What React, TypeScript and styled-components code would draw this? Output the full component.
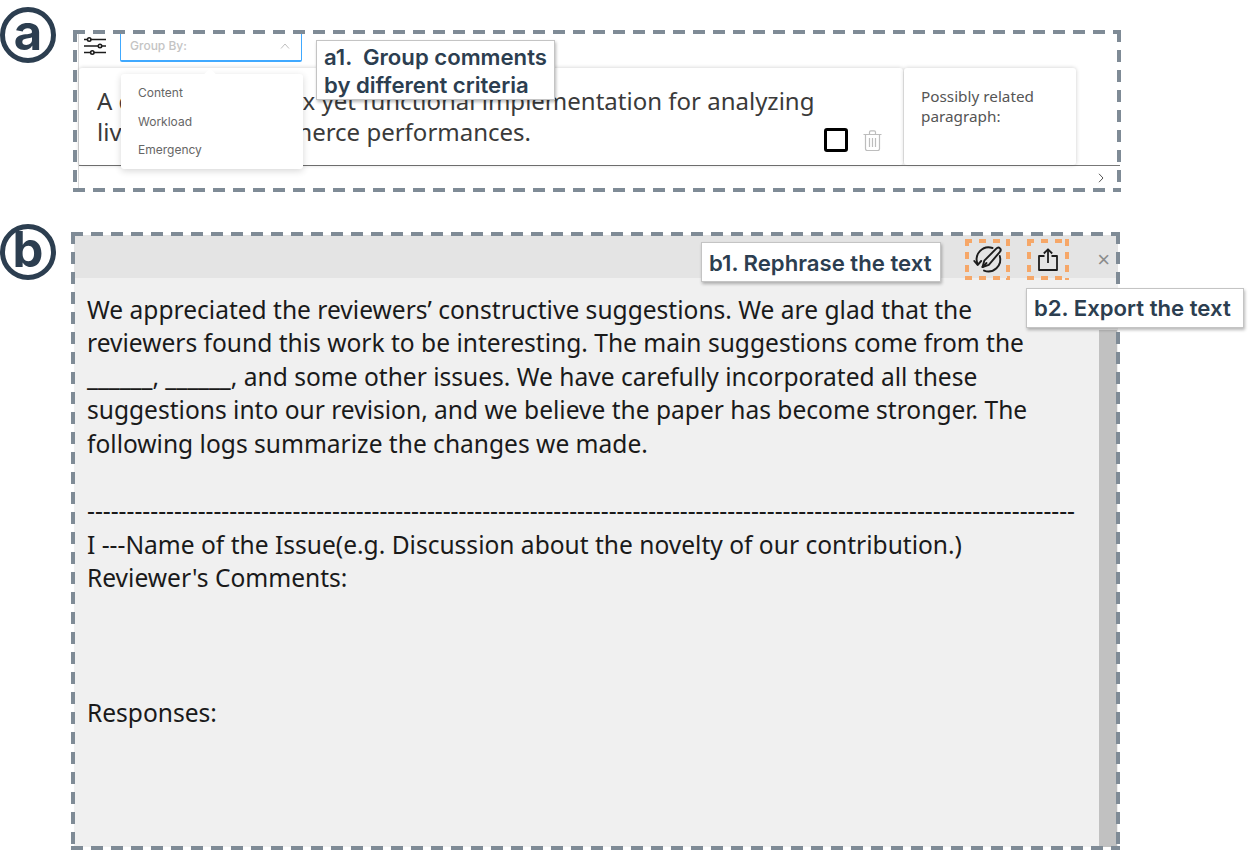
import React from "react";
import styled, { createGlobalStyle } from "styled-components";

const Global = createGlobalStyle`
  html, body { margin: 0; padding: 0; background: #fff; }
  body { font-family: "Noto Sans", sans-serif; }
`;

const Page = styled.div`
  width: 1249px;
  height: 850px;
  overflow: hidden;
  display: flex;
  flex-direction: column;
  gap: 40px;
  padding-top: 30px;
  box-sizing: border-box;
`;

const Section = styled.section`
  display: flex;
  align-items: flex-start;
`;

const Badge = styled.div<{ $gap: number; $top: number }>`
  flex: none;
  width: 56px;
  height: 56px;
  margin-top: ${(p) => p.$top}px;
  margin-right: ${(p) => p.$gap}px;
  border: 5px solid #2c3e50;
  border-radius: 50%;
  box-sizing: border-box;
  display: flex;
  align-items: center;
  justify-content: center;
  color: #2c3e50;
  font: 700 49px/1 "Inter", sans-serif;
  padding-bottom: 6px;
`;

const Frame = styled.div<{ $w: number; $h: number }>`
  position: relative;
  flex: none;
  width: ${(p) => p.$w}px;
  height: ${(p) => p.$h}px;
  box-sizing: border-box;
  &::after {
    content: "";
    position: absolute;
    inset: 0;
    pointer-events: none;
    background:
      repeating-linear-gradient(90deg, #7f8b96 0 12px, transparent 12px 20px) left top / 100% 4px no-repeat,
      repeating-linear-gradient(90deg, #7f8b96 0 12px, transparent 12px 20px) left bottom / 100% 4px no-repeat,
      repeating-linear-gradient(180deg, #7f8b96 0 12px, transparent 12px 20px) left top / 4px 100% no-repeat,
      repeating-linear-gradient(180deg, #7f8b96 0 12px, transparent 12px 20px) right top / 4px 100% no-repeat;
  }
`;

const CommentPanel = styled.div`
  height: 100%;
  margin-left: 5px;
  margin-right: 1px;
  border-left: 1px solid #d9d9d9;
  display: flex;
  flex-direction: column;
`;

const Toolbar = styled.div`
  height: 38px;
  flex: none;
  display: flex;
  align-items: flex-start;
  padding-left: 5px;
`;

const FilterButton = styled.div`
  width: 22px;
  height: 20px;
  margin-top: 6px;
  margin-right: 14px;
  color: #1c1c1c;
`;

const SelectBox = styled.div`
  width: 182px;
  height: 32px;
  box-sizing: border-box;
  border: 1px solid #40a9ff;
  border-top: none;
  border-bottom-width: 2px;
  border-radius: 0 0 2px 2px;
  display: flex;
  align-items: center;
  justify-content: space-between;
  padding: 1px 11px 0 9px;
  font: 500 12px "Inter", sans-serif;
  color: #c4c4c4;
  background: #fff;
`;

const Cards = styled.div`
  height: 97px;
  flex: none;
  display: flex;
  gap: 1px;
  padding-right: 44px;
`;

const Card = styled.div<{ $w: number }>`
  position: relative;
  width: ${(p) => p.$w}px;
  flex: none;
  box-sizing: border-box;
  background: #fff;
  border-radius: 3px;
  box-shadow: 0 0 4px rgba(0, 0, 0, 0.2);
`;

const CommentText = styled.div`
  padding: 17px 60px 0 18px;
  font: 400 24px/31px "Noto Sans", sans-serif;
  color: #3a3a3a;
`;

const CardActions = styled.div`
  position: absolute;
  right: 21px;
  bottom: 13px;
  display: flex;
  align-items: center;
  gap: 15px;
`;

const Checkbox = styled.div`
  width: 24px;
  height: 24px;
  box-sizing: border-box;
  border: 3px solid #000;
  border-radius: 3px;
`;

const SideText = styled.div`
  padding: 17.5px 17px;
  font: 400 15.3px/20px "Noto Sans", sans-serif;
  color: #555;
`;

const Footer = styled.div`
  flex: 1;
  border-top: 1px solid #777;
  display: flex;
  justify-content: flex-end;
  align-items: center;
  padding: 0 16px 3px 0;
  color: #555;
`;

const Dropdown = styled.div`
  position: absolute;
  left: 48px;
  top: 44px;
  width: 182px;
  height: 95px;
  background: #fff;
  border-radius: 3px;
  box-shadow: 0 2px 7px rgba(0, 0, 0, 0.16);
  z-index: 2;
  padding-top: 4.5px;
  box-sizing: border-box;
  &::before {
    content: "";
    position: absolute;
    left: 85px;
    top: -4px;
    width: 8px;
    height: 8px;
    background: #fff;
    transform: rotate(45deg);
  }
`;

const Option = styled.div`
  height: 28.5px;
  padding-left: 17px;
  display: flex;
  align-items: center;
  font: 400 12px "Inter", sans-serif;
  color: #666;
`;

const Callout = styled.div`
  position: absolute;
  z-index: 3;
  box-sizing: border-box;
  background: #fff;
  border: 1px solid #c4c4c4;
  box-shadow: 1px 2px 3px rgba(0, 0, 0, 0.28);
  color: #2c3e50;
  font: 600 22.15px/28px "Inter", sans-serif;
  white-space: pre;
`;

const CalloutA1 = styled(Callout)`
  left: 243px;
  top: 10px;
  width: 239px;
  height: 60px;
  padding: 2px 0 0 7px;
`;

const CalloutB1 = styled(Callout)`
  left: 630px;
  top: 10px;
  width: 240px;
  height: 40px;
  padding: 6px 0 0 7px;
`;

const CalloutB2 = styled(Callout)`
  left: 955px;
  top: 56px;
  width: 218px;
  height: 40px;
  padding: 5px 0 0 7px;
`;

const Doc = styled.div`
  position: absolute;
  inset: 3px 2px 3px 3px;
  display: flex;
  flex-direction: column;
  background: #f0f0f0;
`;

const DocHeader = styled.div`
  height: 43px;
  flex: none;
  box-sizing: border-box;
  background: #e4e4e4;
  display: flex;
  align-items: center;
  justify-content: flex-end;
  padding: 6px 8px 0 0;
`;

const ToolIcon = styled.div<{ $right: number; $w: number }>`
  width: ${(p) => p.$w}px;
  height: 41px;
  margin-right: ${(p) => p.$right}px;
  box-sizing: border-box;
  display: flex;
  align-items: center;
  justify-content: center;
  color: #1c1c1c;
  background:
    repeating-linear-gradient(90deg, #f6a768 0 7px, transparent 7px 14px) left top / 100% 4px no-repeat,
    repeating-linear-gradient(90deg, #f6a768 0 7px, transparent 7px 14px) left bottom / 100% 4px no-repeat,
    repeating-linear-gradient(180deg, #f6a768 0 7px, transparent 7px 13px) left top / 4px 100% no-repeat,
    repeating-linear-gradient(180deg, #f6a768 0 7px, transparent 7px 13px) right top / 4px 100% no-repeat;
`;

const Close = styled.div`
  color: #8c8c8c;
  font: 400 22px/1 "Liberation Sans", sans-serif;
`;

const DocBody = styled.div`
  flex: 1;
  display: flex;
  min-height: 0;
`;

const DocText = styled.div`
  flex: 1;
  padding: 14.5px 20px 0 13px;
  font: 400 24.55px/33.6px "Noto Sans", sans-serif;
  color: #1a1a1a;
  white-space: pre;
  overflow: hidden;
`;

const Scrollbar = styled.div`
  width: 18px;
  flex: none;
  margin-top: 52px;
  background: #c1c1c1;
  margin-right: 1px;
`;

const FilterIcon = () => (
  <svg width="22" height="20" viewBox="0 0 22 20" fill="none" stroke="currentColor" strokeWidth="1.6">
    <path d="M0 3.5h3.5M7 3.5h15M0 10h14M18 10h4M0 16.5h6.5M10 16.5h12" />
    <circle cx="5.2" cy="3.5" r="1.7" />
    <circle cx="16" cy="10" r="1.7" />
    <circle cx="8.3" cy="16.5" r="1.7" />
  </svg>
);

const UpChevron = () => (
  <svg width="10" height="6" viewBox="0 0 10 6" fill="none" stroke="#bfbfbf" strokeWidth="1">
    <path d="M1 5.5 5 1l4 4.5" />
  </svg>
);

const RightChevron = () => (
  <svg width="6" height="10" viewBox="0 0 6 10" fill="none" stroke="currentColor" strokeWidth="1">
    <path d="M1 .8 5 5 1 9.2" />
  </svg>
);

const TrashIcon = () => (
  <svg width="19" height="21" viewBox="0 0 19 21" fill="none" stroke="#bdbdbd" strokeWidth="1.2">
    <path d="M.5 4.5h18M6.5 4.5V2.2c0-.9.5-1.4 1.3-1.4h3.4c.8 0 1.3.5 1.3 1.4v2.3" />
    <path d="M2.5 4.5v14.3c0 1 .7 1.7 1.6 1.7h10.8c.9 0 1.6-.7 1.6-1.7V4.5" />
    <path d="M6.5 8v9M9.5 8v9M12.5 8v9" />
  </svg>
);

const RephraseIcon = () => (
  <svg width="30" height="30" viewBox="0 0 30 30" fill="none" stroke="currentColor" strokeWidth="1.9" strokeLinecap="round" strokeLinejoin="round">
    <path d="M4.6 19A12 12 0 0 1 19.5 3" />
    <path d="M26.8 11A12 12 0 0 1 11 25.6" />
    <path d="M1.3 16 4.6 20l3.6-4" />
    <path d="M9.5 22l1.8-6.3L23 3.8c1.2-1.2 3-1.5 4-.5s.7 2.8-.5 4L15.8 19.8z" />
    <path d="M9.5 22l4-4" />
  </svg>
);

const ExportIcon = () => (
  <svg width="20" height="23" viewBox="0 0 20 23" fill="none" stroke="currentColor" strokeWidth="1.8" strokeLinejoin="round">
    <path d="M6.5 8H1v14h18V8h-5.5" />
    <path d="M10 15V1.5" />
    <path d="M5.8 5.5 10 1.3l4.2 4.2" />
  </svg>
);

const docText = `We appreciated the reviewers’ constructive suggestions. We are glad that the
reviewers found this work to be interesting. The main suggestions come from the
______, ______, and some other issues. We have carefully incorporated all these
suggestions into our revision, and we believe the paper has become stronger. The
following logs summarize the changes we made.

-----------------------------------------------------------------------------------------------------------------------------
I ---Name of the Issue(e.g. Discussion about the novelty of our contribution.)
Reviewer's Comments:



Responses:`;

export default function App() {
  return (
    <Page>
      <Global />
      <Section>
        <Badge $gap={17} $top={-23}>a</Badge>
        <Frame $w={1048} $h={162}>
          <CommentPanel>
            <Toolbar>
              <FilterButton><FilterIcon /></FilterButton>
              <SelectBox>Group By:<UpChevron /></SelectBox>
            </Toolbar>
            <Cards>
              <Card $w={824}>
                <CommentText>
                  A decently complex yet functional implementation for analyzing live sellers e-commerce performances.
                </CommentText>
                <CardActions>
                  <Checkbox />
                  <TrashIcon />
                </CardActions>
              </Card>
              <Card $w={172}>
                <SideText>Possibly related paragraph:</SideText>
              </Card>
            </Cards>
            <Footer><RightChevron /></Footer>
          </CommentPanel>
          <Dropdown>
            <Option>Content</Option>
            <Option>Workload</Option>
            <Option>Emergency</Option>
          </Dropdown>
          <CalloutA1>{"a1.  Group comments\nby different criteria"}</CalloutA1>
        </Frame>
      </Section>
      <Section>
        <Badge $gap={15} $top={-8}>b</Badge>
        <Frame $w={1049} $h={618}>
          <Doc>
            <DocHeader>
              <ToolIcon $w={45} $right={17}><RephraseIcon /></ToolIcon>
              <ToolIcon $w={42} $right={28}><ExportIcon /></ToolIcon>
              <Close>×</Close>
            </DocHeader>
            <DocBody>
              <DocText>{docText}</DocText>
              <Scrollbar />
            </DocBody>
          </Doc>
          <CalloutB1>b1. Rephrase the text</CalloutB1>
          <CalloutB2>b2. Export the text</CalloutB2>
        </Frame>
      </Section>
    </Page>
  );
}
